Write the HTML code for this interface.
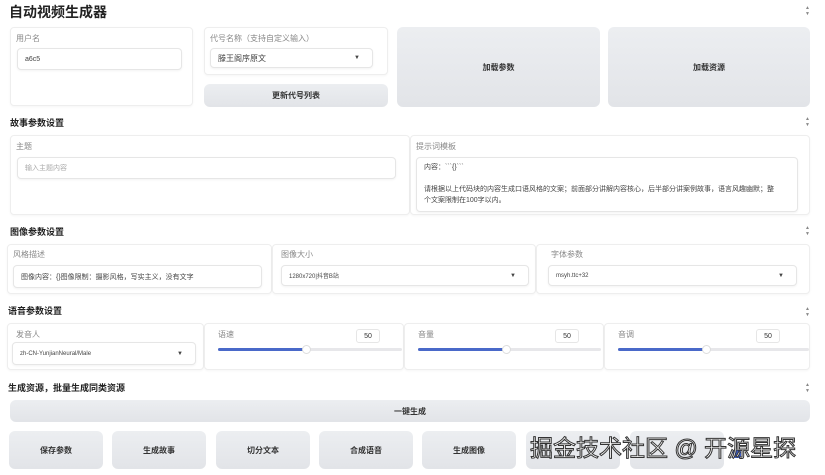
<!DOCTYPE html><html><head><meta charset="utf-8"><style>
*{box-sizing:border-box;margin:0;padding:0}
body{width:825px;height:475px;background:#fff;font-family:"Liberation Sans","Noto Sans CJK SC",sans-serif;position:relative;overflow:hidden;color:#333}
.a{position:absolute}
.h{font-weight:bold;font-size:9px;color:#222}
.box{position:absolute;background:#fff;border:1px solid #eee;border-radius:4px;box-shadow:0 1px 2px rgba(0,0,0,.04)}
.lb{position:absolute;font-size:8px;color:#888}
.in{position:absolute;background:#fff;border:1px solid #e6e6e6;border-radius:4px;font-size:7px;color:#444;padding-left:7px;display:flex;align-items:center;box-shadow:0 1px 2px rgba(0,0,0,.05)}
.btn{position:absolute;background:linear-gradient(#eceef1,#e2e4e8);border-radius:6px;font-size:8px;font-weight:bold;color:#333;display:flex;align-items:center;justify-content:center}
.ar{position:absolute;font-size:5px;color:#888}
.num{position:absolute;border:1px solid #e6e6e6;border-radius:3px;font-size:7px;display:flex;align-items:center;justify-content:center;width:24px;height:14px}
.tr{position:absolute;height:3px;background:#e7e7ea;border-radius:2px}
.tr i{display:block;height:3px;background:#4a69c9;border-radius:2px}
.kn{position:absolute;width:9px;height:9px;border-radius:50%;background:#fff;border:1px solid #ddd}
</style></head><body>
<div class="a" style="left:9px;top:2px;font-size:14px;font-weight:bold;color:#222">自动视频生成器</div>
<div class="ar" style="left:805px;top:5px">▲<br>▼</div>

<div class="box" style="left:10px;top:27px;width:183px;height:79px"></div>
<div class="lb" style="left:16px;top:33px">用户名</div>
<div class="in" style="left:17px;top:48px;width:165px;height:22px">a6c5</div>
<div class="box" style="left:204px;top:27px;width:184px;height:48px"></div>
<div class="lb" style="left:210px;top:33px">代号名称（支持自定义输入）</div>
<div class="in" style="left:210px;top:48px;width:163px;height:20px;font-size:8px">滕王阁序原文<span style="position:absolute;right:12px;font-size:6px">▼</span></div>
<div class="btn" style="left:204px;top:84px;width:184px;height:23px">更新代号列表</div>
<div class="btn" style="left:397px;top:27px;width:203px;height:80px">加载参数</div>
<div class="btn" style="left:608px;top:27px;width:202px;height:80px">加载资源</div>

<div class="a h" style="left:10px;top:116px">故事参数设置</div>
<div class="ar" style="left:805px;top:116px">▲<br>▼</div>
<div class="box" style="left:10px;top:135px;width:400px;height:80px"></div>
<div class="lb" style="left:16px;top:141px">主题</div>
<div class="in" style="left:17px;top:157px;width:379px;height:22px;color:#aaa">输入主题内容</div>
<div class="box" style="left:410px;top:135px;width:400px;height:80px"></div>
<div class="lb" style="left:416px;top:141px">提示词模板</div>
<div class="in" style="left:416px;top:157px;width:382px;height:55px;display:block;padding:4px 22px 0 7px;line-height:11px">内容：&#96;&#96;&#96;{}&#96;&#96;&#96;<br><br>请根据以上代码块的内容生成口语风格的文案；前面部分讲解内容核心，后半部分讲案例故事，语言风趣幽默；整个文案限制在100字以内。</div>

<div class="a h" style="left:10px;top:225px">图像参数设置</div>
<div class="ar" style="left:805px;top:225px">▲<br>▼</div>
<div class="box" style="left:7px;top:244px;width:265px;height:50px"></div>
<div class="lb" style="left:13px;top:249px">风格描述</div>
<div class="in" style="left:13px;top:265px;width:249px;height:23px">图像内容：{}图像限制：摄影风格，写实主义，没有文字</div>
<div class="box" style="left:272px;top:244px;width:264px;height:50px"></div>
<div class="lb" style="left:281px;top:249px">图像大小</div>
<div class="in" style="left:281px;top:265px;width:248px;height:21px;font-size:6px">1280x720|抖音B站<span style="position:absolute;right:12px">▼</span></div>
<div class="box" style="left:536px;top:244px;width:274px;height:50px"></div>
<div class="lb" style="left:551px;top:249px">字体参数</div>
<div class="in" style="left:548px;top:265px;width:249px;height:21px;font-size:6px">msyh.ttc+32<span style="position:absolute;right:12px">▼</span></div>

<div class="a h" style="left:8px;top:304px">语音参数设置</div>
<div class="ar" style="left:805px;top:306px">▲<br>▼</div>
<div class="box" style="left:7px;top:323px;width:197px;height:47px"></div>
<div class="lb" style="left:16px;top:329px">发音人</div>
<div class="in" style="left:12px;top:342px;width:184px;height:23px;font-size:6px">zh-CN-YunjianNeural/Male<span style="position:absolute;right:12px">▼</span></div>
<div class="box" style="left:204px;top:323px;width:200px;height:47px"></div>
<div class="lb" style="left:218px;top:329px">语速</div><div class="num" style="left:356px;top:329px">50</div>
<div class="tr" style="left:218px;top:348px;width:184px"><i style="width:87px"></i></div><div class="kn" style="left:302px;top:345px"></div>
<div class="box" style="left:404px;top:323px;width:200px;height:47px"></div>
<div class="lb" style="left:418px;top:329px">音量</div><div class="num" style="left:555px;top:329px">50</div>
<div class="tr" style="left:418px;top:348px;width:183px"><i style="width:87px"></i></div><div class="kn" style="left:502px;top:345px"></div>
<div class="box" style="left:604px;top:323px;width:206px;height:47px"></div>
<div class="lb" style="left:618px;top:329px">音调</div><div class="num" style="left:756px;top:329px">50</div>
<div class="tr" style="left:618px;top:348px;width:191px"><i style="width:87px"></i></div><div class="kn" style="left:702px;top:345px"></div>

<div class="a h" style="left:8px;top:381px">生成资源，批量生成同类资源</div>
<div class="ar" style="left:805px;top:382px">▲<br>▼</div>
<div class="btn" style="left:10px;top:400px;width:800px;height:22px">一键生成</div>
<div class="btn" style="left:9px;top:431px;width:94px;height:38px">保存参数</div>
<div class="btn" style="left:112px;top:431px;width:94px;height:38px">生成故事</div>
<div class="btn" style="left:216px;top:431px;width:94px;height:38px">切分文本</div>
<div class="btn" style="left:319px;top:431px;width:94px;height:38px">合成语音</div>
<div class="btn" style="left:422px;top:431px;width:94px;height:38px">生成图像</div>
<div class="btn" style="left:526px;top:431px;width:94px;height:38px"></div>
<div class="btn" style="left:630px;top:431px;width:94px;height:38px"></div>
<div class="a" style="left:733px;top:450px;width:8px;height:8px;background:#3b5cc4;border-radius:2px"></div>
<div class="a" style="left:530px;top:429px;font-size:23px;color:#fff;-webkit-text-stroke:1px #333;white-space:nowrap">掘金技术社区 @ 开源星探</div>
</body></html>
